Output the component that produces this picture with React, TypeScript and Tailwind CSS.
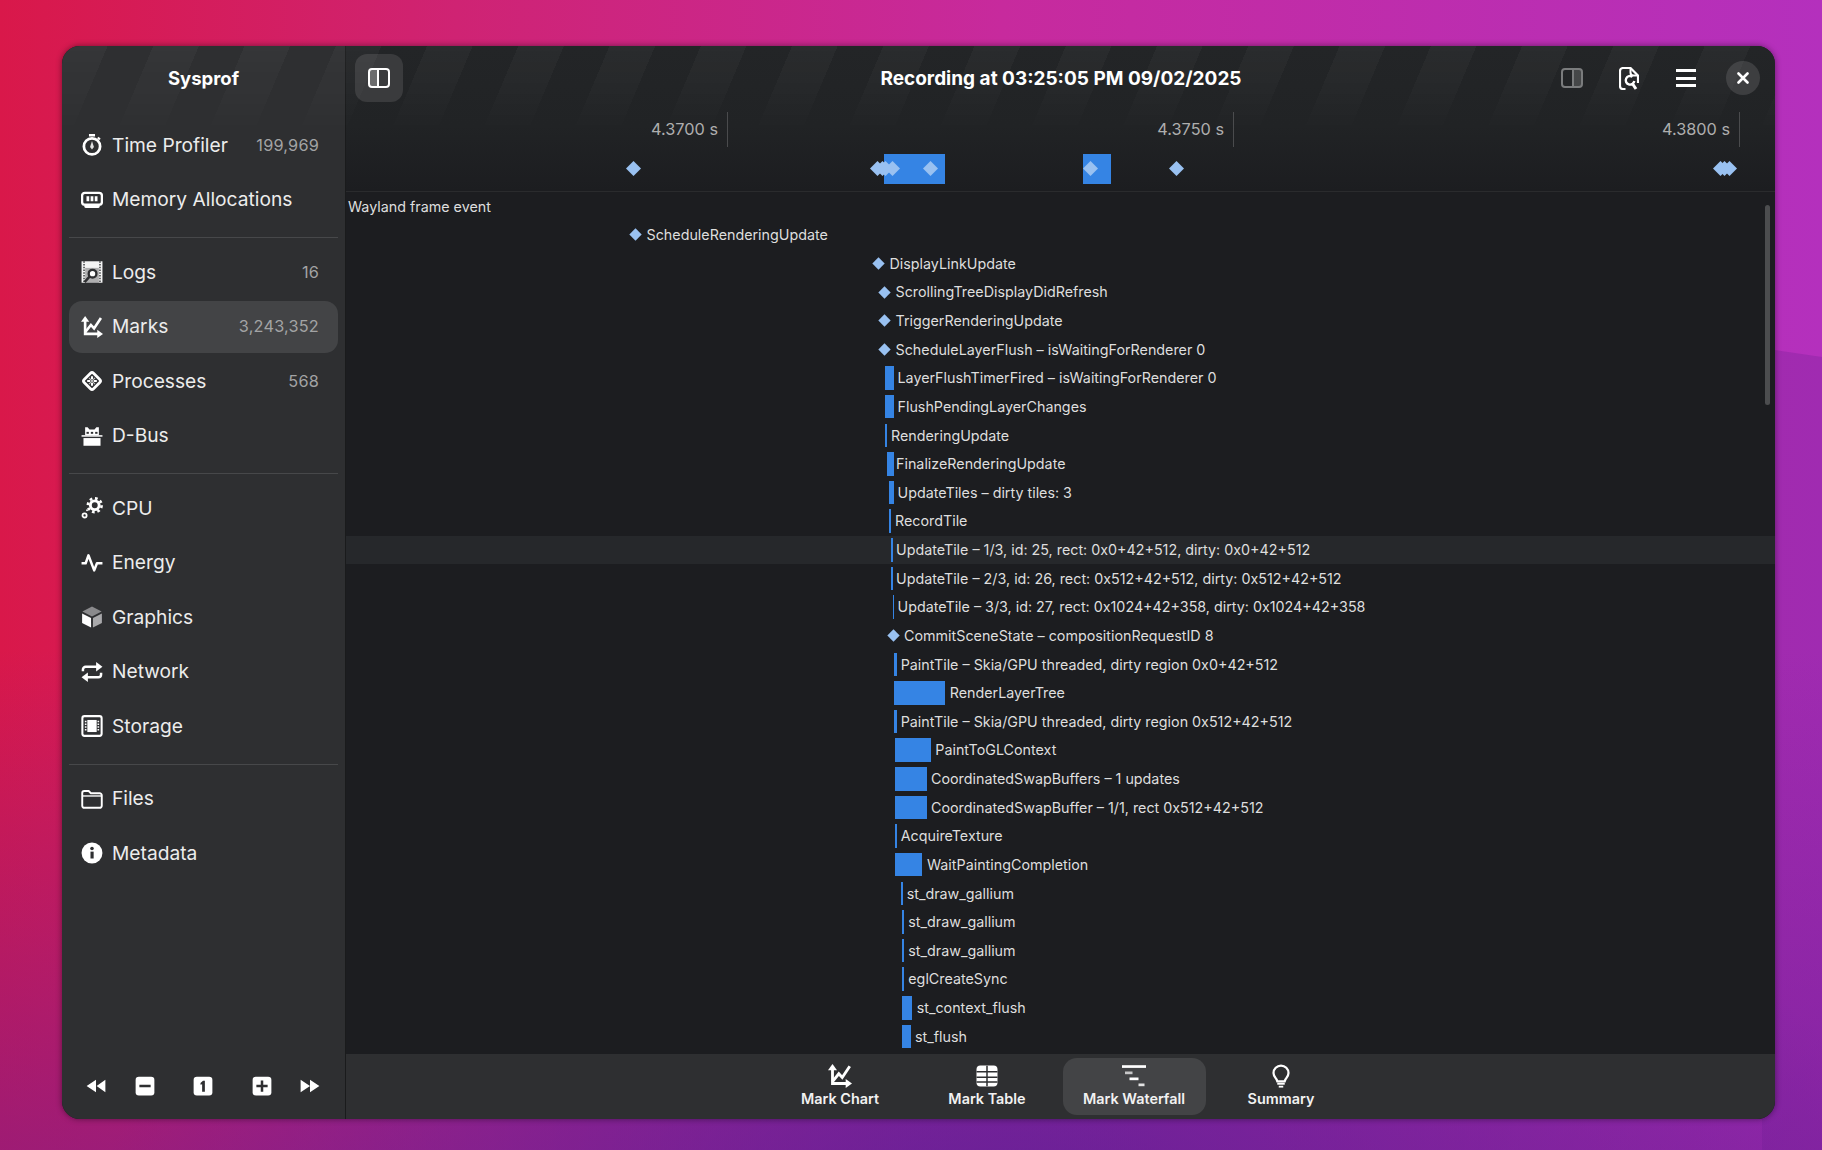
import React from "react";

const DARK = "#2e2f31";

function Ico({ size = 22, className = "", children }: { size?: number; className?: string; children: React.ReactNode }) {
  return (
    <svg viewBox="0 0 16 16" width={size} height={size} fill="white" className={"shrink-0 " + className}>
      {children}
    </svg>
  );
}

const MarksPaths = () => (
  <>
    <path d="M3 3v10h10" fill="none" stroke="white" strokeWidth="1.9" />
    <path d="M3 0 6 4.2H0z" />
    <path d="M16 13 11.8 16V10z" />
    <path d="M3 11.8 7.2 6.5 9.5 9 14.5 1.5" fill="none" stroke="white" strokeWidth="1.9" />
  </>
);

const icons: Record<string, React.ReactNode> = {
  time: (
    <>
      <path d="M5.8 0h4.4v1.8H5.8z" />
      <path d="M12.8 2l1.5 1.5-1.1 1.1-1.5-1.5z" />
      <circle cx="8" cy="9" r="5.9" fill="none" stroke="white" strokeWidth="2" />
      <path d="M8 5 9.4 9.4 8 11.2 6.6 9.4z" opacity="0.85" />
    </>
  ),
  memory: (
    <>
      <rect x="0.8" y="2.8" width="14.4" height="8.6" rx="2" fill="none" stroke="white" strokeWidth="1.7" />
      <path d="M4 5.3h2v3.6H4zM7 5.3h2v3.6H7zM10 5.3h2v3.6h-2z" />
      <path d="M2.4 11h11.2v1.8a1 1 0 0 1-1 1H3.4a1 1 0 0 1-1-1z" />
    </>
  ),
  logs: (
    <>
      <rect x="0.4" y="0.2" width="15.2" height="15.6" fill="white" opacity="0.95" />
      <path d="M2.2 0.2V15.8M13.8 0.2V15.8" stroke={DARK} strokeWidth="1" strokeDasharray="1 1" />
      <rect x="3" y="5" width="10" height="10.8" fill={DARK} opacity="0.35" />
      <circle cx="8.4" cy="9.2" r="2.8" fill="white" stroke={DARK} strokeWidth="1.7" />
      <path d="M6.2 11.4 2.6 15.4" stroke={DARK} strokeWidth="1.8" />
    </>
  ),
  marks: <MarksPaths />,
  processes: (
    <>
      <rect x="3.2" y="3.2" width="9.6" height="9.6" rx="1.6" transform="rotate(45 8 8)" fill="none" stroke="white" strokeWidth="2" />
      <path d="M8 4.5v2.2M8 9.3v2.2M4.5 8h2.2M9.3 8h2.2" stroke="white" strokeWidth="1.5" />
      <path d="M5.8 5.8 10.2 10.2M10.2 5.8 5.8 10.2" stroke="white" strokeWidth="0.8" opacity="0.7" />
    </>
  ),
  dbus: (
    <>
      <path d="M3 1.6h1.8l1.4 1.6h3.6L11.2 1.6H13v5.8H3z" />
      <path d="M0.4 7.4h15.2v1.1H0.4z" />
      <path d="M1.8 9.5h12.4v5.6H1.8z" />
      <rect x="4" y="5" width="1.7" height="1.4" fill={DARK} />
      <rect x="7.15" y="5" width="1.7" height="1.4" fill={DARK} />
      <rect x="10.3" y="5" width="1.7" height="1.4" fill={DARK} />
    </>
  ),
  cpu: (
    <>
      <circle cx="10" cy="6" r="5" fill="none" stroke="white" strokeWidth="1.9" strokeDasharray="1.95 1.98" />
      <circle cx="10" cy="6" r="3.2" fill="none" stroke="white" strokeWidth="2.1" />
      <circle cx="2.6" cy="13.4" r="1.5" fill="none" stroke="white" strokeWidth="1.3" />
      <circle cx="4.4" cy="9.6" r="0.7" />
    </>
  ),
  energy: <path d="M0.4 8.2H3.4L5.4 2.4 9.6 13.4 11.6 8.2H15.6" fill="none" stroke="white" strokeWidth="1.8" strokeLinejoin="round" />,
  graphics: (
    <>
      <path d="M8 0.4 15 4 8 7.6 1 4z" fill="#8a8a8c" />
      <path d="M0.8 5.4 7.3 8.8V15.6L0.8 12.4z" />
      <path d="M15.2 5.4 8.7 8.8V15.6L15.2 12.4z" fill="#a9a9ab" />
    </>
  ),
  network: (
    <>
      <path d="M1.4 7.4V6.2a2 2 0 0 1 2-2H12" fill="none" stroke="white" strokeWidth="1.8" />
      <path d="M11 0.8 15.6 4.2 11 7.6z" />
      <path d="M14.6 8.6v1.2a2 2 0 0 1-2 2H4" fill="none" stroke="white" strokeWidth="1.8" />
      <path d="M5 8.4 0.4 11.8 5 15.2z" />
    </>
  ),
  storage: (
    <>
      <rect x="1" y="0.8" width="14" height="14.4" rx="1.5" fill="none" stroke="white" strokeWidth="1.5" />
      <rect x="4.6" y="3.6" width="6.8" height="8.8" />
      <path d="M3.4 4.2V12M12.6 4.2V12" stroke="white" strokeWidth="1.2" strokeDasharray="1 1" />
    </>
  ),
  files: (
    <>
      <path
        d="M2.4 2.2h3.2L7.2 3.8h6.4a1.5 1.5 0 0 1 1.5 1.5v7.6a1.5 1.5 0 0 1-1.5 1.5H2.4A1.5 1.5 0 0 1 0.9 12.9V3.7A1.5 1.5 0 0 1 2.4 2.2z"
        fill="none"
        stroke="white"
        strokeWidth="1.4"
      />
      <path d="M1 5.8h14" stroke="white" strokeWidth="1" />
    </>
  ),
  metadata: (
    <>
      <circle cx="8" cy="8" r="7.6" />
      <rect x="6.9" y="7" width="2.3" height="5" fill={DARK} />
      <circle cx="8" cy="4.7" r="1.3" fill={DARK} />
    </>
  ),
};

type Item = { id: string; label: string; count?: string; active?: boolean };
const groups: Item[][] = [
  [
    { id: "time", label: "Time Profiler", count: "199,969" },
    { id: "memory", label: "Memory Allocations" },
  ],
  [
    { id: "logs", label: "Logs", count: "16" },
    { id: "marks", label: "Marks", count: "3,243,352", active: true },
    { id: "processes", label: "Processes", count: "568" },
    { id: "dbus", label: "D-Bus" },
  ],
  [
    { id: "cpu", label: "CPU" },
    { id: "energy", label: "Energy" },
    { id: "graphics", label: "Graphics" },
    { id: "network", label: "Network" },
    { id: "storage", label: "Storage" },
  ],
  [
    { id: "files", label: "Files" },
    { id: "metadata", label: "Metadata" },
  ],
];

type Row = { t: string; k?: "d" | "b"; x?: number; w?: number; tx: number; hover?: boolean };
const rows: Row[] = [
  { t: "Wayland frame event", tx: 348 },
  { t: "ScheduleRenderingUpdate", k: "d", x: 635, tx: 646.5 },
  { t: "DisplayLinkUpdate", k: "d", x: 878, tx: 889.5 },
  { t: "ScrollingTreeDisplayDidRefresh", k: "d", x: 884, tx: 895.5 },
  { t: "TriggerRenderingUpdate", k: "d", x: 884, tx: 895.5 },
  { t: "ScheduleLayerFlush – isWaitingForRenderer 0", k: "d", x: 884, tx: 895.5 },
  { t: "LayerFlushTimerFired – isWaitingForRenderer 0", k: "b", x: 885, w: 9, tx: 897.5 },
  { t: "FlushPendingLayerChanges", k: "b", x: 885, w: 9, tx: 897.5 },
  { t: "RenderingUpdate", k: "b", x: 885, w: 2, tx: 891 },
  { t: "FinalizeRenderingUpdate", k: "b", x: 887, w: 6.5, tx: 896 },
  { t: "UpdateTiles – dirty tiles: 3", k: "b", x: 889, w: 5, tx: 897.5 },
  { t: "RecordTile", k: "b", x: 889, w: 2, tx: 895 },
  { t: "UpdateTile – 1/3, id: 25, rect: 0x0+42+512, dirty: 0x0+42+512", k: "b", x: 891, w: 1.5, tx: 896, hover: true },
  { t: "UpdateTile – 2/3, id: 26, rect: 0x512+42+512, dirty: 0x512+42+512", k: "b", x: 891, w: 1.5, tx: 896 },
  { t: "UpdateTile – 3/3, id: 27, rect: 0x1024+42+358, dirty: 0x1024+42+358", k: "b", x: 892.5, w: 1.5, tx: 897.5 },
  { t: "CommitSceneState – compositionRequestID 8", k: "d", x: 893.5, tx: 904 },
  { t: "PaintTile – Skia/GPU threaded, dirty region 0x0+42+512", k: "b", x: 893.7, w: 3, tx: 900.7 },
  { t: "RenderLayerTree", k: "b", x: 893.7, w: 51.3, tx: 949.7 },
  { t: "PaintTile – Skia/GPU threaded, dirty region 0x512+42+512", k: "b", x: 893.7, w: 3, tx: 900.7 },
  { t: "PaintToGLContext", k: "b", x: 895, w: 36, tx: 935.3 },
  { t: "CoordinatedSwapBuffers – 1 updates", k: "b", x: 895, w: 31.7, tx: 931 },
  { t: "CoordinatedSwapBuffer – 1/1, rect 0x512+42+512", k: "b", x: 895, w: 31.7, tx: 931 },
  { t: "AcquireTexture", k: "b", x: 894.7, w: 2, tx: 900.7 },
  { t: "WaitPaintingCompletion", k: "b", x: 895, w: 27.3, tx: 927 },
  { t: "st_draw_gallium", k: "b", x: 900.7, w: 2, tx: 906.7 },
  { t: "st_draw_gallium", k: "b", x: 902.3, w: 1.7, tx: 908.3 },
  { t: "st_draw_gallium", k: "b", x: 902.3, w: 1.7, tx: 908.3 },
  { t: "eglCreateSync", k: "b", x: 902.3, w: 1.7, tx: 908.3 },
  { t: "st_context_flush", k: "b", x: 902.3, w: 10, tx: 916.7 },
  { t: "st_flush", k: "b", x: 902.3, w: 8.7, tx: 915 },
];

const ORIGIN = 346;

function WaterRow({ r }: { r: Row }) {
  const start = r.k === "d" ? (r.x as number) - 6.5 : r.x ?? r.tx;
  const glyphW = r.k === "d" ? 13 : r.k === "b" ? (r.w as number) : 0;
  return (
    <div
      className={"flex h-[28.63px] shrink-0 items-center " + (r.hover ? "bg-[#26282b]" : "")}
      style={{ paddingLeft: start - ORIGIN }}
    >
      {r.k === "d" && (
        <svg viewBox="0 0 12 12" width="13" height="13" className="shrink-0">
          <path d="M6 0.3 11.7 6 6 11.7 0.3 6z" fill="#99c1f1" />
        </svg>
      )}
      {r.k === "b" && <div className="h-[23.5px] shrink-0 bg-[#3584e4]" style={{ width: r.w }} />}
      <span
        className="whitespace-nowrap text-[14.3px] text-[#dedede]"
        style={{ marginLeft: r.tx - start - glyphW }}
      >
        {r.t}
      </span>
    </div>
  );
}

const topDiamonds = [633.7, 877.5, 882.4, 885, 892.8, 930.3, 1090.2, 1176.3, 1720, 1724.5, 1729.3];
const topBlocks = [
  { x: 883.6, w: 61.6 },
  { x: 1083.4, w: 27.5 },
];
const ticks = [
  { x: 727, label: "4.3700 s" },
  { x: 1233, label: "4.3750 s" },
  { x: 1739, label: "4.3800 s" },
];

const tabs = [
  {
    label: "Mark Chart",
    icon: <MarksPaths />,
  },
  {
    label: "Mark Table",
    icon: (
      <>
        <rect x="1" y="1" width="14" height="14" rx="2.6" />
        <path d="M1 5.2h14M1 8.8h14M1 12h14M8 1.2v13.6" stroke={DARK} strokeWidth="1" />
      </>
    ),
  },
  {
    label: "Mark Waterfall",
    active: true,
    icon: (
      <>
        <rect x="0" y="0.8" width="16" height="1.8" />
        <rect x="2" y="5" width="5" height="1.8" opacity="0.7" />
        <rect x="5" y="9" width="6" height="1.8" />
        <rect x="11" y="13" width="4" height="1.8" opacity="0.85" />
      </>
    ),
  },
  {
    label: "Summary",
    icon: (
      <>
        <path
          d="M8 1a5 5 0 0 1 5 5c0 2-1.2 3-2 4.2-.3.5-.4 1-.5 1.3h-5c-.1-.3-.2-.8-.5-1.3C4.2 9 3 8 3 6a5 5 0 0 1 5-5z"
          fill="none"
          stroke="white"
          strokeWidth="1.5"
        />
        <rect x="5.5" y="12.5" width="5" height="1.3" />
        <rect x="6.5" y="14.5" width="3" height="1.2" />
      </>
    ),
  },
];

function BoxIcon({ children, className = "" }: { children: React.ReactNode; className?: string }) {
  return (
    <Ico size={20} className={className}>
      <rect x="0.5" y="0.5" width="15" height="15" rx="2.6" />
      {children}
    </Ico>
  );
}

export default function App() {
  return (
    <div className="relative h-[1150px] w-[1822px] overflow-hidden bg-[radial-gradient(ellipse_900px_420px_at_55%_105%,#5f2399_0%,rgba(95,35,153,0)_100%),linear-gradient(90deg,#d9184a_0%,#cf2373_25%,#c72a9d_55%,#b430bd_100%)] pl-[62px] pt-[46px] font-['Inter','Noto_Sans',sans-serif]">
      <div className="absolute bottom-0 right-0 top-[348px] w-[60px] bg-[rgba(70,20,120,0.18)] [clip-path:polygon(0_0,100%_9px,100%_100%,0_100%)]" />
      <div className="absolute bottom-0 left-0 right-0 h-[500px] bg-[linear-gradient(180deg,rgba(120,30,150,0)_0%,rgba(110,30,150,0.55)_100%)]" />

      <div className="relative flex h-[1073px] w-[1713px] overflow-hidden rounded-[18px] bg-[#1c1d20] shadow-[0_0_6px_rgba(0,0,0,0.45)]">
        <aside className="flex w-[284px] shrink-0 flex-col border-r border-[#1a1b1c] bg-[#2e2f31] text-[#ececec]">
          <div className="flex h-[64px] shrink-0 items-center justify-center pt-[2px] text-[18.5px] font-bold text-white">
            Sysprof
          </div>
          <nav className="flex-1 px-[7px] pt-[9px]">
            {groups.map((g, gi) => (
              <React.Fragment key={gi}>
                {gi > 0 && <div className="mb-[8px] mt-[11.5px] h-px bg-[#47484a]" />}
                <div className="flex flex-col gap-[2.5px]">
                  {g.map((it) => (
                    <div
                      key={it.id}
                      className={
                        "flex h-[52px] items-center rounded-[13px] pl-[12px] pr-[19px] " +
                        (it.active ? "bg-[#434446]" : "")
                      }
                    >
                      <Ico size={22}>{icons[it.id]}</Ico>
                      <span className="ml-[9px] text-[19.2px]">{it.label}</span>
                      {it.count && (
                        <span className="ml-auto text-[16.3px] tracking-[0.2px] text-[#a2a3a4]">{it.count}</span>
                      )}
                    </div>
                  ))}
                </div>
              </React.Fragment>
            ))}
          </nav>
          <div className="flex h-[65px] shrink-0 items-center pb-[2px] pl-[24px]">
            <Ico size={20}>
              <path d="M8 3v10L0.5 8zM15.5 3v10L8.5 8z" />
            </Ico>
            <BoxIcon className="ml-[28.7px]">
              <rect x="3.5" y="7" width="9" height="2" fill={DARK} />
            </BoxIcon>
            <BoxIcon className="ml-[38.3px]">
              <path d="M6 5.5 8 3.8h1.5v8.7H7.3V6.5L6 7z" fill={DARK} />
            </BoxIcon>
            <BoxIcon className="ml-[39px]">
              <path d="M7 3.5h2V7h3.5v2H9v3.5H7V9H3.5V7H7z" fill={DARK} />
            </BoxIcon>
            <Ico size={20} className="ml-[28px]">
              <path d="M0.5 3v10L8 8zM8 3v10l7.5-5z" />
            </Ico>
          </div>
        </aside>

        <main className="flex min-w-0 flex-1 flex-col">
          <header className="relative h-[146px] shrink-0 border-b border-[#2a2b2d] bg-[linear-gradient(180deg,#232527_0%,#212325_55%,#1c1d20_100%)]">
            <div className="flex h-[64px] items-center pl-[9px] pr-[15px]">
              <button className="flex h-[48px] w-[48px] items-center justify-center rounded-[12px] bg-[#3a3b3d]">
                <svg viewBox="0 0 22 20" width="22" height="20" fill="none">
                  <rect x="1" y="1" width="20" height="18" rx="3" stroke="white" strokeWidth="2" />
                  <rect x="2" y="2" width="7.5" height="16" fill="white" opacity="0.25" />
                  <path d="M10 1v18" stroke="white" strokeWidth="2" />
                </svg>
              </button>
              <div className="flex-1 pl-[158px] pt-[2px] text-center text-[19px] font-bold text-white">
                Recording at 03:25:05 PM 09/02/2025
              </div>
              <div className="flex items-center">
                <svg viewBox="0 0 22 20" width="22" height="20" fill="none" className="mr-[36px] opacity-40">
                  <rect x="1" y="1" width="20" height="18" rx="3" stroke="white" strokeWidth="2" />
                  <rect x="12.5" y="2" width="7.5" height="16" fill="white" opacity="0.4" />
                  <path d="M12 1v18" stroke="white" strokeWidth="2" />
                </svg>
                <svg viewBox="0 0 20 23" width="20" height="23" fill="none" className="mr-[37px]">
                  <path d="M6.5 22H4a3 3 0 0 1-3-3V4a3 3 0 0 1 3-3h7.5L19 8.5V16" stroke="white" strokeWidth="2.2" />
                  <path d="M11.5 1.5v4a3 3 0 0 0 3 3h4" stroke="white" strokeWidth="2" />
                  <path d="M13.5 9.8A4.3 4.3 0 1 0 15.3 14" stroke="white" strokeWidth="2.4" />
                  <path d="M13 16 17 22" stroke="white" strokeWidth="3" />
                </svg>
                <div className="mr-[30px] flex w-[20px] flex-col gap-[4.5px]">
                  <div className="h-[3px] bg-white" />
                  <div className="h-[3px] bg-white" />
                  <div className="h-[3px] bg-white" />
                </div>
                <button className="flex h-[34px] w-[34px] items-center justify-center rounded-full bg-[#3d3e40]">
                  <svg viewBox="0 0 12 12" width="12" height="12">
                    <path d="M1.5 1.5 10.5 10.5M10.5 1.5 1.5 10.5" stroke="white" strokeWidth="2.6" strokeLinecap="round" />
                  </svg>
                </button>
              </div>
            </div>
            {ticks.map((t) => (
              <div key={t.x} className="absolute top-[66px] h-[35px] w-px bg-[#4a4b4d]" style={{ left: t.x - ORIGIN }}>
                <span className="absolute right-[10px] top-[5px] whitespace-nowrap text-[16.3px] text-[#aeaeae]">
                  {t.label}
                </span>
              </div>
            ))}
            {topBlocks.map((b) => (
              <div
                key={b.x}
                className="absolute top-[108px] h-[30px] bg-[#3584e4]"
                style={{ left: b.x - ORIGIN, width: b.w }}
              />
            ))}
            {topDiamonds.map((x) => (
              <svg
                key={x}
                viewBox="0 0 12 12"
                width="15"
                height="15"
                className="absolute top-[115px]"
                style={{ left: x - ORIGIN - 7.5 }}
              >
                <path d="M6 0 12 6 6 12 0 6z" fill="#99c1f1" />
              </svg>
            ))}
          </header>

          <div className="relative flex min-h-0 flex-1 flex-col overflow-hidden">
            {rows.map((r, i) => (
              <WaterRow key={i} r={r} />
            ))}
            <div className="absolute right-[5px] top-[13px] h-[200px] w-[5px] rounded-full bg-[#4c4d4f]" />
          </div>

          <footer className="flex h-[65px] shrink-0 items-center justify-center gap-[4px] bg-[#2e2f31]">
            {tabs.map((t) => (
              <div
                key={t.label}
                className={
                  "flex h-[57px] w-[143px] flex-col items-center justify-center rounded-[14px] pb-[1px] " +
                  (t.active ? "bg-[#434446]" : "")
                }
              >
                <Ico size={24}>{t.icon}</Ico>
                <span className="mt-[2px] text-[14.4px] font-semibold leading-[18px] text-[#f2f2f2]">{t.label}</span>
              </div>
            ))}
          </footer>
        </main>

        <div className="pointer-events-none absolute inset-x-0 top-0 h-[95px] bg-[repeating-linear-gradient(113deg,rgba(255,255,255,0.035)_0px,rgba(255,255,255,0.035)_42px,transparent_42px,transparent_84px)] [mask-image:linear-gradient(180deg,black_0%,transparent_100%)]" />
      </div>
    </div>
  );
}
